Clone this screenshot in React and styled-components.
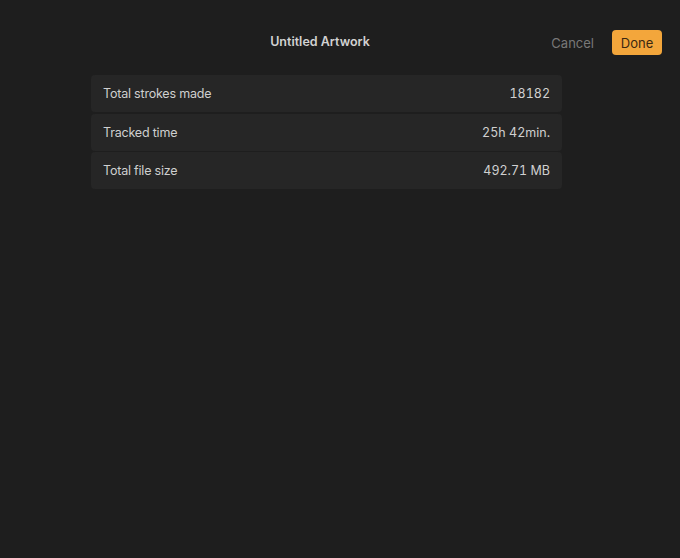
import React from "react";
import styled, { createGlobalStyle } from "styled-components";

const Global = createGlobalStyle`
  html, body { margin: 0; padding: 0; background: #1e1e1e; }
  body { font-family: Inter, "Helvetica Neue", "Liberation Sans", sans-serif; -webkit-font-smoothing: antialiased; }
`;

const Page = styled.div`
  width: 680px;
  height: 558px;
  background: #1e1e1e;
  box-sizing: border-box;
`;

const Header = styled.div`
  position: relative;
  height: 75px;
  display: flex;
  align-items: flex-start;
  justify-content: center;
  padding-right: 40px;
`;

const Title = styled.div`
  margin-top: 34px;
  font-size: 12.5px;
  font-weight: 600;
  color: #d2d2d2;
`;

const Actions = styled.div`
  position: absolute;
  right: 18px;
  top: 30px;
  display: flex;
  align-items: center;
  gap: 18px;
`;

const CancelButton = styled.button`
  background: none;
  border: none;
  padding: 0;
  font-family: inherit;
  font-size: 13px;
  color: #787878;
`;

const DoneButton = styled.button`
  width: 50px;
  height: 25px;
  border: none;
  border-radius: 4px;
  background: #f3a63b;
  color: #3a2812;
  font-family: inherit;
  font-size: 13px;
  padding: 0;
`;

const List = styled.div`
  width: 471px;
  margin-left: 91px;
  display: flex;
  flex-direction: column;
  gap: 1.5px;
`;

const Row = styled.div`
  height: 37px;
  background: #262626;
  border-radius: 4px;
  display: flex;
  align-items: center;
  justify-content: space-between;
  padding: 0 12px;
  font-size: 12.5px;
  letter-spacing: -0.2px;
  color: #cfcfcf;
`;

const Value = styled.span`
  color: #d0d0d0;
  letter-spacing: 0;
  font-feature-settings: "tnum";
`;

const rows = [
  ["Total strokes made", "18182"],
  ["Tracked time", "25h 42min."],
  ["Total file size", "492.71 MB"],
];

export default function App() {
  return (
    <Page>
      <Global />
      <Header>
        <Title>Untitled Artwork</Title>
        <Actions>
          <CancelButton>Cancel</CancelButton>
          <DoneButton>Done</DoneButton>
        </Actions>
      </Header>
      <List>
        {rows.map(([label, value]) => (
          <Row key={label}>
            <span>{label}</span>
            <Value>{value}</Value>
          </Row>
        ))}
      </List>
    </Page>
  );
}
